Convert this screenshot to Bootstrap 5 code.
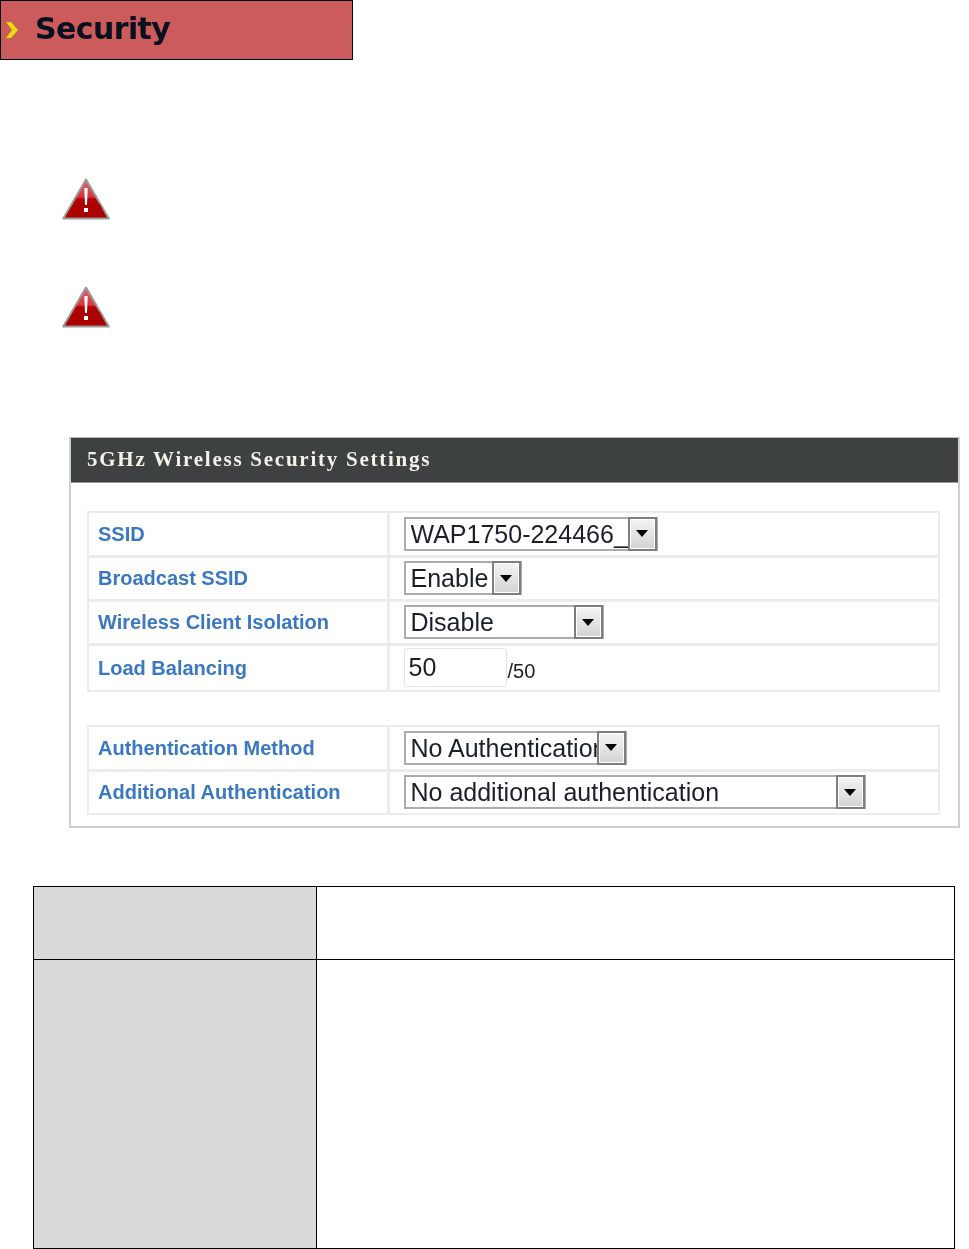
<!DOCTYPE html>
<html lang="en">
<head>
<meta charset="utf-8">
<title>Security</title>
<link href="https://cdn.jsdelivr.net/npm/bootstrap@5.3.0/dist/css/bootstrap.min.css" rel="stylesheet">
<style>
html,body{margin:0;background:#fff;overflow:hidden}
.page-wrap{width:969px;height:1249px}
.sec-banner{width:353px;height:60px;background:#cc5c5c;border:1px solid #000;padding-left:4px;gap:9px}
.sec-banner span{font:700 30px/1 "DejaVu Sans",sans-serif;color:#0a1020;filter:blur(.5px);letter-spacing:-.6px;position:relative;top:-1px}
.warn-stack{margin:118px 0 0 62px;gap:66px}
.warn-stack svg{display:block;filter:blur(.3px)}
.wifi-panel{margin:109px 0 0 69px;width:891px;height:391px;border:2px solid #cfcfcf;border-top:1px solid #bbb}
.wifi-head{height:45px;background:#3d4142;padding-left:16px;border-bottom:1px solid #999;color:#f4f1e8;font:700 21px/43px "Liberation Serif",serif;letter-spacing:1.75px;filter:blur(.3px)}
.wifi-body{padding:28px 18px 0 16px}
.form-tbl{width:853px;margin:0;border-collapse:collapse;table-layout:fixed;border:2px solid #ececec}
.form-tbl td{border:3px solid #ececec;padding:0 0 0 14px;vertical-align:middle;background:#fff}
.form-tbl tr:first-child td{border-top-width:2px}
.form-tbl tr:last-child td{border-bottom-width:2px}
.form-tbl td:first-child{border-left-width:2px;padding-left:9px;width:300px;font:700 20px/1 "Liberation Sans",sans-serif;color:#3a78c2;filter:blur(.35px)}
.form-tbl td:last-child{border-right-width:2px}
.gap-one{margin-top:33px}
.row-h{height:44px}
.row-tall{height:47px}
.fake-sel{height:34px;border:2px solid #a9adb3;background:#fff;font:400 25px/30px "Liberation Sans",sans-serif;color:#1a1f2b;padding-left:5px;filter:blur(.35px)}
.fake-sel .sel-text{flex:1 1 auto;white-space:nowrap;overflow:hidden}
.sel-arrow{flex:0 0 29px;height:34px;margin:-2px -1px 0 0;border:2px solid #7e7e7e;background:linear-gradient(#f4f4f4,#d3d3d3);box-shadow:inset 0 0 0 1px #fff}
.sel-arrow i{display:block;border:6px solid transparent;border-top:7px solid #000;border-bottom:0}
.w254{width:254px}.w118{width:118px}.w200{width:200px}.w223{width:223px}.w462{width:462px}
.fake-input{width:103px;height:39px;border:1px solid #dfe3ea;border-radius:3px;padding-left:4px;background:#fff;font:400 25px/37px "Liberation Sans",sans-serif;color:#1a1f2b;filter:blur(.35px)}
.input-suffix{font:400 20px/1 "Liberation Sans",sans-serif;color:#222;margin-left:1px;position:relative;top:3px;filter:blur(.35px)}
.desc-tbl{width:922px;height:363px;margin:58px 0 0 33px;border-collapse:collapse;table-layout:fixed}
.desc-tbl td{border:1px solid #000;padding:0;background:#fff}
.desc-tbl td.cell-label{width:283px;background:#d9d9d9}
.rh-a{height:73px}
</style>
</head>
<body>
<div class="page-wrap">
  <div class="sec-banner d-flex align-items-center">
    <svg width="21" height="22" viewBox="0 0 21 22" aria-hidden="true" style="filter:blur(.4px)"><path d="M1 3h5l7 8-7 8H1l6-8z" fill="#e8dc10"/></svg>
    <span>Security</span>
  </div>

  <div class="warn-stack d-flex flex-column">
    <svg width="48" height="42" viewBox="0 0 48 42" aria-label="Warning"><defs><linearGradient id="rg" x1="0" y1="0" x2="0" y2="1"><stop offset="0" stop-color="#e2666c"/><stop offset=".45" stop-color="#d9333a"/><stop offset=".5" stop-color="#b40000"/><stop offset="1" stop-color="#a80000"/></linearGradient></defs><path d="M24 1.5 46.8 40.5H1.2z" fill="url(#rg)" stroke="#9a9a9a" stroke-width="2" stroke-linejoin="round"/><path d="M5 39C12 28 24 22 38 26l6 13H34C32 33 27 32 23 39z" fill="#a80000" opacity=".6"/><path d="M22.3 10h3.4l-.7 17h-2z" fill="#fff"/><rect x="22" y="30" width="4" height="4" fill="#fff"/></svg>
    <svg width="48" height="42" viewBox="0 0 48 42" aria-label="Warning"><path d="M24 1.5 46.8 40.5H1.2z" fill="url(#rg)" stroke="#9a9a9a" stroke-width="2" stroke-linejoin="round"/><path d="M5 39C12 28 24 22 38 26l6 13H34C32 33 27 32 23 39z" fill="#a80000" opacity=".6"/><path d="M22.3 10h3.4l-.7 17h-2z" fill="#fff"/><rect x="22" y="30" width="4" height="4" fill="#fff"/></svg>
  </div>

  <div class="wifi-panel">
    <div class="wifi-head">5GHz Wireless Security Settings</div>
    <div class="wifi-body">
      <table class="form-tbl">
        <tr class="row-h"><td>SSID</td><td><div class="fake-sel w254 d-flex"><span class="sel-text">WAP1750-224466_A</span><span class="sel-arrow d-flex align-items-center justify-content-center"><i></i></span></div></td></tr>
        <tr class="row-h"><td>Broadcast SSID</td><td><div class="fake-sel w118 d-flex"><span class="sel-text">Enable</span><span class="sel-arrow d-flex align-items-center justify-content-center"><i></i></span></div></td></tr>
        <tr class="row-h"><td>Wireless Client Isolation</td><td><div class="fake-sel w200 d-flex"><span class="sel-text">Disable</span><span class="sel-arrow d-flex align-items-center justify-content-center"><i></i></span></div></td></tr>
        <tr class="row-tall"><td>Load Balancing</td><td><div class="d-flex align-items-center"><div class="fake-input">50</div><span class="input-suffix">/50</span></div></td></tr>
      </table>
      <table class="form-tbl gap-one">
        <tr class="row-h"><td>Authentication Method</td><td><div class="fake-sel w223 d-flex"><span class="sel-text">No Authentication</span><span class="sel-arrow d-flex align-items-center justify-content-center"><i></i></span></div></td></tr>
        <tr class="row-h"><td>Additional Authentication</td><td><div class="fake-sel w462 d-flex"><span class="sel-text">No additional authentication</span><span class="sel-arrow d-flex align-items-center justify-content-center"><i></i></span></div></td></tr>
      </table>
    </div>
  </div>

  <table class="desc-tbl">
    <tr class="rh-a"><td class="cell-label"></td><td></td></tr>
    <tr><td class="cell-label"></td><td></td></tr>
  </table>
</div>
<script src="https://cdn.jsdelivr.net/npm/bootstrap@5.3.0/dist/js/bootstrap.bundle.min.js"></script>
</body>
</html>
